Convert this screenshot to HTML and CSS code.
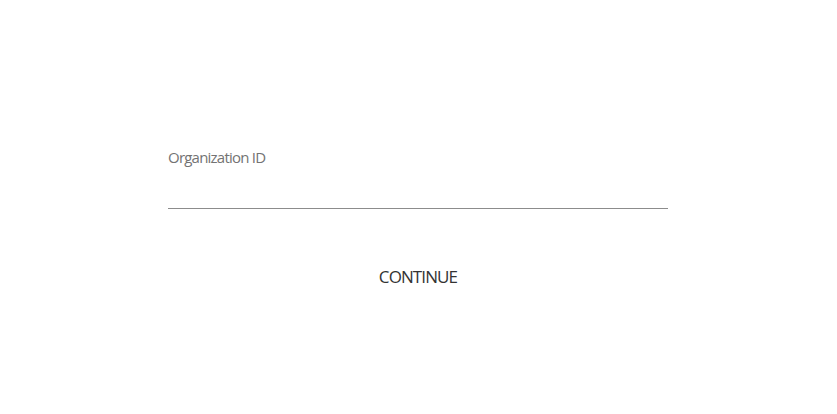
FILE: index.html
```html
<!DOCTYPE html>
<html>
<head>
<meta charset="utf-8">
<link rel="stylesheet" href="styles.css">
</head>
<body>
<main class="page">
  <form class="form">
    <label class="field">
      <span class="field-label">Organization ID</span>
      <input class="field-input" type="text">
    </label>
    <button class="continue" type="button">CONTINUE</button>
  </form>
</main>
</body>
</html>
```
FILE: styles.css
```css
html, body {
  margin: 0;
  padding: 0;
  background: #ffffff;
}
body {
  font-family: "Open Sans", "Noto Sans", sans-serif;
}
.page {
  height: 414px;
  box-sizing: border-box;
  padding: 0 169px 0 168px;
  display: flex;
}
.form {
  flex: 1;
  padding-top: 147px;
  display: flex;
  flex-direction: column;
}
.field {
  display: flex;
  flex-direction: column;
}
.field-label {
  font-size: 15px;
  line-height: 20px;
  color: #737373;
  letter-spacing: -0.78px;
}
.field-input {
  margin-top: 20px;
  height: 21px;
  border: none;
  border-bottom: 1px solid #8c8c8c;
  padding: 0;
  outline: none;
  background: transparent;
}
.continue {
  align-self: center;
  margin-top: 56px;
  background: none;
  border: none;
  padding: 0;
  font-family: "Open Sans", "Noto Sans", sans-serif;
  font-size: 17px;
  line-height: 24px;
  color: #333333;
  letter-spacing: -0.9px;
}
```
